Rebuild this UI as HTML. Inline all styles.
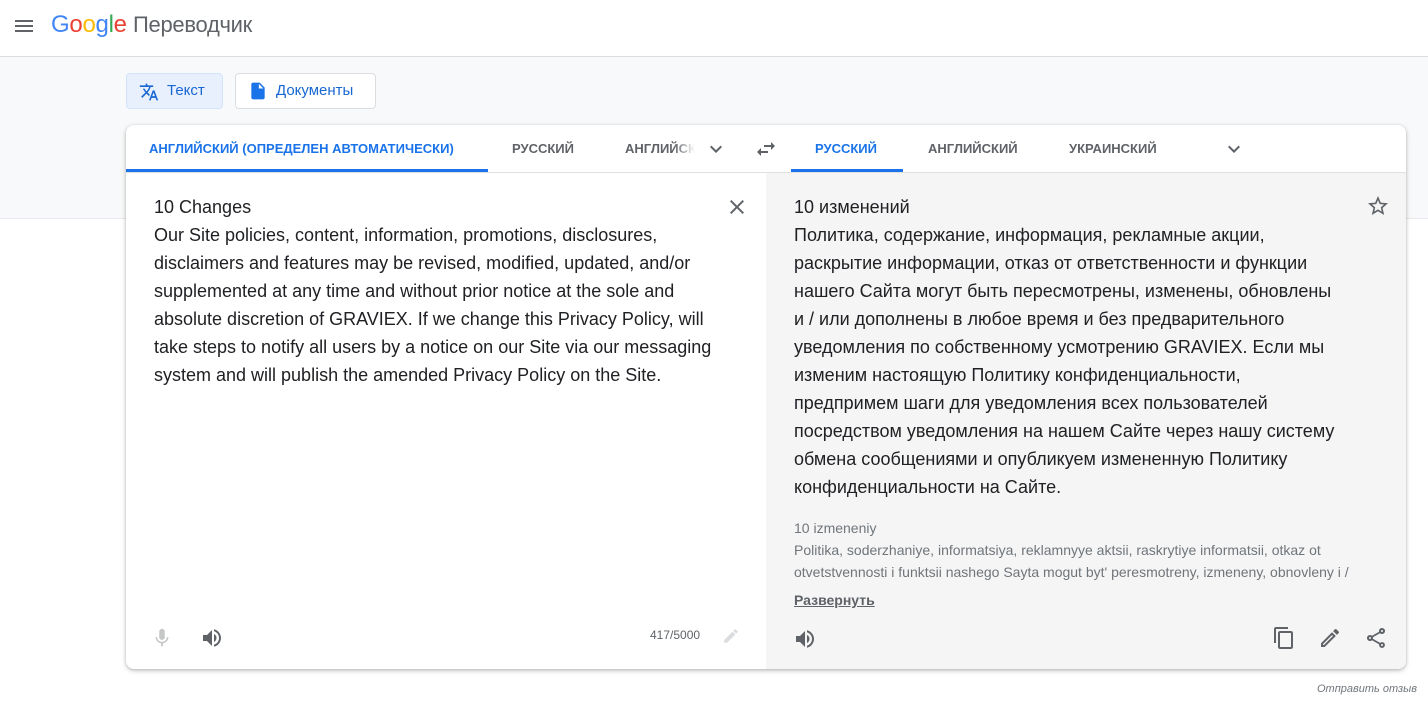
<!DOCTYPE html>
<html><head><meta charset="utf-8"><style>
*{margin:0;padding:0;box-sizing:border-box}
body{width:1428px;height:709px;overflow:hidden;background:#fff;font-family:"Liberation Sans",Arial,sans-serif;color:#3c4043;position:relative}
.hdr{height:57px;border-bottom:1px solid #dadce0;position:relative}
.band{position:absolute;top:57px;left:0;width:1428px;height:162px;background:#f8f9fa;border-bottom:1px solid #e8eaed}
.abs{position:absolute}
.btn{position:absolute;top:73px;height:36px;border-radius:4px;font-size:15px;line-height:34px;color:#1967d2}
.card{position:absolute;left:126px;top:125px;width:1280px;height:544px;background:#fff;border-radius:8px;box-shadow:0 1px 3px rgba(60,64,67,.3),0 2px 6px rgba(60,64,67,.15);overflow:hidden}
.tab{position:absolute;top:0;height:48px;line-height:48px;font-size:13px;font-weight:bold;color:#5f6368;letter-spacing:0}
.blue{color:#1a73e8}
.txt{position:absolute;font-size:18px;line-height:28px;color:#202124}
</style></head><body>
<div class="hdr">
<svg class="abs" style="left:12px;top:14px" width="24" height="24" viewBox="0 0 24 24"><path d="M3 18h18v-2H3v2zm0-5h18v-2H3v2zm0-7v2h18V6H3z" fill="#5f6368"/></svg>
<div class="abs" style="left:51px;top:10px;font-size:24px;line-height:30px;letter-spacing:-.3px"><span style="color:#4285f4">G</span><span style="color:#ea4335">o</span><span style="color:#fbbc05">o</span><span style="color:#4285f4">g</span><span style="color:#34a853">l</span><span style="color:#ea4335">e</span> <span style="color:#5f6368;font-size:22px">Переводчик</span></div>
</div>
<div class="band"></div>
<div class="btn" style="left:126px;width:97px;background:#e8f0fe;border:1px solid #d2e3fc">
<svg class="abs" style="left:12px;top:8px" width="20" height="20" viewBox="0 0 24 24"><path fill="#1967d2" d="M12.87 15.07l-2.54-2.51.03-.03A17.52 17.52 0 0014.07 6H17V4h-7V2H8v2H1v2h11.17C11.5 7.92 10.44 9.75 9 11.35 8.07 10.32 7.3 9.19 6.69 8h-2c.73 1.63 1.73 3.170 2.98 4.56l-5.09 5.02L4 19l5-5 3.11 3.11.76-2.04zM18.5 10h-2L12 22h2l1.12-3h4.75L21 22h2l-4.5-12zm-2.62 7l1.62-4.33L19.12 17h-3.240z"/></svg>
<span class="abs" style="left:40px">Текст</span></div>
<div class="btn" style="left:235px;width:141px;background:#fff;border:1px solid #dadce0">
<svg class="abs" style="left:12px;top:7px" width="20" height="20" viewBox="0 0 24 24"><path fill="#1a73e8" d="M14 2H6c-1.1 0-2 .9-2 2v16c0 1.1.9 2 2 2h12c1.1 0 2-.9 2-2V8l-6-6zm-1 7V3.5L18.5 9H13z"/></svg>
<span class="abs" style="left:40px">Документы</span></div>

<div class="card">
<div class="abs" style="left:0;top:47px;width:1280px;height:1px;background:#e0e0e0"></div>
<div class="tab blue" style="left:23px">АНГЛИЙСКИЙ (ОПРЕДЕЛЕН АВТОМАТИЧЕСКИ)</div>
<div class="abs" style="left:0;top:44px;width:362px;height:3px;background:#1a73e8"></div>
<div class="tab" style="left:386px">РУССКИЙ</div>
<div class="tab" style="left:499px;width:70px;overflow:hidden;white-space:nowrap;-webkit-mask-image:linear-gradient(90deg,#000 70%,transparent)">АНГЛИЙСКИЙ</div>
<svg class="abs" style="left:578px;top:12px" width="24" height="24" viewBox="0 0 24 24"><path d="M7.41 8.59L12 13.17l4.59-4.58L18 10l-6 6-6-6z" fill="#5f6368"/></svg>
<svg class="abs" style="left:628px;top:12px" width="24" height="24" viewBox="0 0 24 24"><path d="M6.99 11L3 15l3.99 4v-3H14v-2H6.99v-3zM21 9l-3.99-4v3H10v2h7.01v3L21 9z" fill="#5f6368"/></svg>
<div class="tab blue" style="left:689px">РУССКИЙ</div>
<div class="abs" style="left:665px;top:44px;width:112px;height:3px;background:#1a73e8"></div>
<div class="tab" style="left:802px">АНГЛИЙСКИЙ</div>
<div class="tab" style="left:943px">УКРАИНСКИЙ</div>
<svg class="abs" style="left:1096px;top:12px" width="24" height="24" viewBox="0 0 24 24"><path d="M7.41 8.59L12 13.17l4.59-4.58L18 10l-6 6-6-6z" fill="#5f6368"/></svg>

<div class="abs" style="left:640px;top:48px;width:640px;height:496px;background:#f5f5f5"></div>
<div class="txt" style="left:28px;top:68px;width:580px">10 Changes<br>Our Site policies, content, information, promotions, disclosures, disclaimers and features may be revised, modified, updated, and/or supplemented at any time and without prior notice at the sole and absolute discretion of GRAVIEX. If we change this Privacy Policy, will take steps to notify all users by a notice on our Site via our messaging system and will publish the amended Privacy Policy on the Site.</div>
<svg class="abs" style="left:599px;top:70px" width="24" height="24" viewBox="0 0 24 24"><path d="M19 6.41L17.59 5 12 10.59 6.41 5 5 6.41 10.59 12 5 17.59 6.41 19 12 13.41 17.59 19 19 17.59 13.41 12z" fill="#5f6368"/></svg>
<div class="txt" style="left:668px;top:68px;width:560px">10 изменений<br>Политика, содержание, информация, рекламные акции,<br>раскрытие информации, отказ от ответственности и функции<br>нашего Сайта могут быть пересмотрены, изменены, обновлены<br>и / или дополнены в любое время и без предварительного<br>уведомления по собственному усмотрению GRAVIEX. Если мы<br>изменим настоящую Политику конфиденциальности,<br>предпримем шаги для уведомления всех пользователей<br>посредством уведомления на нашем Сайте через нашу систему<br>обмена сообщениями и опубликуем измененную Политику<br>конфиденциальности на Сайте.</div>
<svg class="abs" style="left:1240px;top:69px" width="24" height="24" viewBox="0 0 24 24"><path d="M22 9.24l-7.19-.62L12 2 9.19 8.63 2 9.24l5.46 4.73L5.82 21 12 17.27 18.18 21l-1.63-7.03L22 9.24zM12 15.4l-3.76 2.27 1-4.28-3.32-2.88 4.38-.38L12 6.1l1.71 4.04 4.38.38-3.32 2.88 1 4.28L12 15.4z" fill="#5f6368"/></svg>
<div class="abs" style="left:668px;top:392px;width:560px;font-size:14px;line-height:22px;color:#70757a">10 izmeneniy<br>Politika, soderzhaniye, informatsiya, reklamnyye aktsii, raskrytiye informatsii, otkaz ot otvetstvennosti i funktsii nashego Sayta mogut byt' peresmotreny, izmeneny, obnovleny i /</div>
<div class="abs" style="left:668px;top:467px;font-size:14px;font-weight:bold;color:#5f6368;text-decoration:underline">Развернуть</div>

<svg class="abs" style="left:25px;top:502px" width="22" height="22" viewBox="0 0 24 24"><path d="M12 14c1.66 0 3-1.34 3-3V5c0-1.66-1.34-3-3-3S9 3.34 9 5v6c0 1.66 1.34 3 3 3zm5.3-3c0 3-2.54 5.1-5.3 5.1S6.7 14 6.7 11H5c0 3.41 2.72 6.23 6 6.720V21h2v-3.28c3.28-.48 6-3.3 6-6.72h-1.7z" fill="#c4c7c5"/></svg>
<svg class="abs" style="left:74px;top:501px" width="24" height="24" viewBox="0 0 24 24"><path d="M3 9v6h4l5 5V4L7 9H3zm13.5 3A4.5 4.5 0 0014 7.97v8.05c1.48-.73 2.5-2.25 2.5-4.02zM14 3.23v2.06c2.89.86 5 3.54 5 6.71s-2.11 5.85-5 6.71v2.06c4.01-.91 7-4.490 7-8.77s-2.99-7.86-7-8.77z" fill="#5f6368"/></svg>
<div class="abs" style="left:524px;top:503px;font-size:12px;color:#5f6368">417/5000</div>
<svg class="abs" style="left:596px;top:502px" width="18" height="18" viewBox="0 0 24 24"><path d="M3 17.25V21h3.75L17.81 9.94l-3.75-3.75L3 17.25zM20.71 7.04a1 1 0 000-1.41l-2.34-2.34a1 1 0 00-1.41 0l-1.830 1.83 3.75 3.75 1.83-1.83z" fill="#dadce0"/></svg>
<svg class="abs" style="left:667px;top:502px" width="24" height="24" viewBox="0 0 24 24"><path d="M3 9v6h4l5 5V4L7 9H3zm13.5 3A4.5 4.5 0 0014 7.97v8.05c1.48-.73 2.5-2.25 2.5-4.02zM14 3.23v2.06c2.89.86 5 3.54 5 6.71s-2.11 5.85-5 6.71v2.06c4.01-.91 7-4.49 7-8.77s-2.99-7.86-7-8.77z" fill="#5f6368"/></svg>
<svg class="abs" style="left:1146px;top:501px" width="24" height="24" viewBox="0 0 24 24"><path d="M16 1H4c-1.1 0-2 .9-2 2v14h2V3h12V1zm3 4H8c-1.1 0-2 .9-2 2v14c0 1.1.9 2 2 2h11c1.1 0 2-.9 2-2V7c0-1.1-.9-2-2-2zm0 16H8V7h11v14z" fill="#5f6368"/></svg>
<svg class="abs" style="left:1192px;top:501px" width="24" height="24" viewBox="0 0 24 24"><path d="M3 17.25V21h3.75L17.81 9.94l-3.75-3.75L3 17.25zM5.92 19H5v-.92l9.06-9.06.92.92L5.92 19zM20.71 5.63l-2.34-2.34a1 1 0 00-1.41 0l-1.83 1.83 3.75 3.75 1.83-1.83a1 1 0 000-1.41z" fill="#5f6368"/></svg>
<svg class="abs" style="left:1238px;top:501px" width="24" height="24" viewBox="0 0 24 24"><path d="M18 16.08c-.76 0-1.44.3-1.96.77L8.91 12.7c.05-.23.09-.46.09-.7s-.04-.47-.09-.7l7.05-4.11A2.99 2.99 0 0021 5a3 3 0 10-5.91.7L8.04 9.81A2.99 2.99 0 003 12a3 3 0 005.04 2.19l7.12 4.16c-.05.21-.08.43-.08.65A2.92 2.92 0 1018 16.08zM18 4c.55 0 1 .45 1 1s-.45 1-1 1-1-.45-1-1 .45-1 1-1zM6 13c-.55 0-1-.45-1-1s.45-1 1-1 1 .45 1 1-.45 1-1 1zm12 7.02c-.55 0-1-.45-1-1s.45-1 1-1 1 .45 1 1-.45 1-1 1z" fill="#5f6368"/></svg>
</div>
<div class="abs" style="left:1317px;top:683px;font-size:11px;font-style:italic;color:#70757a">Отправить отзыв</div>
</body></html>
